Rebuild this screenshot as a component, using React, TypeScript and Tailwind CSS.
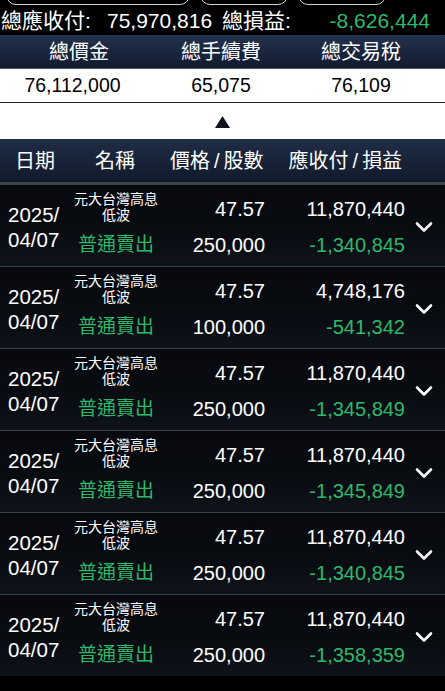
import React from 'react';

const font = { fontFamily: '"Liberation Sans", "Noto Sans CJK TC", sans-serif' };

type Trade = {
  date: string;
  time: string;
  price: string;
  qty: string;
  amount: string;
  pnl: string;
};

const trades: Trade[] = [
  { date: '2025/', time: '04/07', price: '47.57', qty: '250,000', amount: '11,870,440', pnl: '-1,340,845' },
  { date: '2025/', time: '04/07', price: '47.57', qty: '100,000', amount: '4,748,176', pnl: '-541,342' },
  { date: '2025/', time: '04/07', price: '47.57', qty: '250,000', amount: '11,870,440', pnl: '-1,345,849' },
  { date: '2025/', time: '04/07', price: '47.57', qty: '250,000', amount: '11,870,440', pnl: '-1,345,849' },
  { date: '2025/', time: '04/07', price: '47.57', qty: '250,000', amount: '11,870,440', pnl: '-1,340,845' },
  { date: '2025/', time: '04/07', price: '47.57', qty: '250,000', amount: '11,870,440', pnl: '-1,358,359' },
];

const Chevron: React.FC = () => (
  <svg width="18" height="12" viewBox="0 0 18 12" fill="none">
    <path d="M2 2.5 L9 9.5 L16 2.5" stroke="white" strokeWidth="2.6" strokeLinecap="round" strokeLinejoin="round" />
  </svg>
);

const TradeRow: React.FC<{ t: Trade }> = ({ t }) => (
  <div className="h-[82px] flex items-stretch border-t border-[#3a4049] bg-gradient-to-b from-[#07090e] via-[#080b10] to-[#0e131a]">
    {/* 日期 */}
    <div className="w-[70px] pl-[8px] flex flex-col justify-center text-white text-[20.5px] leading-[25px] pt-[3px]">
      <span>{t.date}</span>
      <span>{t.time}</span>
    </div>
    {/* 名稱 */}
    <div className="w-[92px] flex flex-col items-center pt-[6px]">
      <span className="text-white text-[14px] leading-[16px] whitespace-nowrap">元大台灣高息</span>
      <span className="text-white text-[14px] leading-[16px]">低波</span>
      <span className="text-[#2fb86a] text-[19px] leading-[24px] mt-[10px]">普通賣出</span>
    </div>
    {/* 價格/股數 */}
    <div className="w-[103px] flex flex-col items-end justify-center text-white text-[20px] leading-[36px] pt-[2px]">
      <span>{t.price}</span>
      <span>{t.qty}</span>
    </div>
    {/* 應收付/損益 */}
    <div className="w-[140px] flex flex-col items-end justify-center text-[20px] leading-[36px] pt-[2px]">
      <span className="text-white">{t.amount}</span>
      <span className="text-[#2fb86a]">{t.pnl}</span>
    </div>
    <div className="flex-1 flex items-center pl-[10px] pt-[2px]">
      <Chevron />
    </div>
  </div>
);

const App: React.FC = () => {
  return (
    <div className="w-[445px] h-[691px] bg-black overflow-hidden" style={font}>
      {/* 上方按鈕（僅露出底部） */}
      <div className="h-[7px] relative overflow-hidden">
        <div className="absolute left-[6px] top-[-30px] w-[184px] h-[35px] rounded-[10px] border-[1.5px] border-[#d0d0d0]" />
        <div className="absolute left-[200px] top-[-30px] w-[88px] h-[35px] rounded-[10px] border-[1.5px] border-[#d0d0d0]" />
        <div className="absolute left-[298px] top-[-30px] w-[88px] h-[35px] rounded-[10px] border-[1.5px] border-[#d0d0d0]" />
      </div>

      {/* 總計 */}
      <div className="h-[28px] flex items-center text-[21px] text-white whitespace-nowrap">
        <span className="w-[107px] pl-[1px]">總應收付:</span>
        <span className="w-[115px]">75,970,816</span>
        <span className="w-[100px]">總損益:</span>
        <span className="w-[108px] text-right text-[#2fb86a]">-8,626,444</span>
      </div>

      {/* 總價金 header */}
      <div className="h-[34px] flex items-center text-white text-[20px] bg-gradient-to-b from-[#23324d] to-[#111b2e] border-b border-[#4a5566]">
        <div className="w-[148px] text-center pl-[10px]">總價金</div>
        <div className="w-[146px] text-center">總手續費</div>
        <div className="w-[134px] text-center">總交易稅</div>
      </div>
      <div className="h-[34px] flex items-center bg-white text-black text-[19.5px] border-b border-[#222]">
        <div className="w-[148px] text-center pr-[3px]">76,112,000</div>
        <div className="w-[146px] text-center">65,075</div>
        <div className="w-[134px] text-center">76,109</div>
      </div>
      <div className="h-[36px] bg-white flex items-center justify-center pt-[2px]">
        <svg width="15" height="12" viewBox="0 0 15 12">
          <path d="M7.5 0 L15 12 L0 12 Z" fill="#0d1420" />
        </svg>
      </div>

      {/* 欄位 header */}
      <div className="h-[45px] flex items-center text-white text-[20px] bg-gradient-to-b from-[#1f2d46] to-[#111a2b] border-b-[2px] border-[#3b4552]">
        <span className="ml-[15px]">日期</span>
        <span className="ml-[40px]">名稱</span>
        <span className="ml-[35px]">
          價格<span className="mx-[4px]">/</span>股數
        </span>
        <span className="ml-[25px]">
          應收付<span className="mx-[4px]">/</span>損益
        </span>
      </div>

      {/* 明細 */}
      <div>
        {trades.map((t, i) => (
          <TradeRow key={i} t={t} />
        ))}
      </div>
    </div>
  );
};

export default App;
